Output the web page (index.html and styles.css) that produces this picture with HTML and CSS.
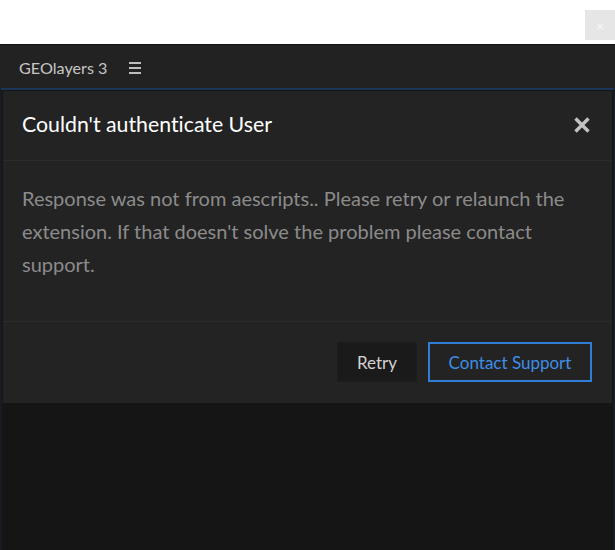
FILE: index.html
```html
<!DOCTYPE html>
<html>
<head>
<meta charset="utf-8">
<link rel="stylesheet" href="styles.css">
</head>
<body>
<div class="top">
  <div class="mini">×</div>
</div>
<div class="app">
  <div class="hdr">
    <span class="hdr-title">GEOlayers 3</span>
    <span class="burger"><i></i><i></i><i></i></span>
  </div>
  <div class="stage">
    <div class="modal">
      <div class="m-head">
        <h1 class="m-title">Couldn't authenticate User</h1>
        <svg class="m-close" width="18" height="18" viewBox="0 0 18 18"><path d="M2.5 2.5 L15.5 15.5 M15.5 2.5 L2.5 15.5" stroke="#c2c2c2" stroke-width="3.4" stroke-linecap="butt"/></svg>
      </div>
      <div class="m-body">
        <p>Response was not from aescripts.. Please retry or relaunch the extension. If that doesn't solve the problem please contact support.</p>
      </div>
      <div class="m-foot">
        <button class="btn btn-retry">Retry</button>
        <button class="btn btn-contact">Contact Support</button>
      </div>
    </div>
  </div>
</div>
</body>
</html>
```
FILE: styles.css
```css
html, body {
  margin: 0;
  padding: 0;
  background: #ffffff;
  font-family: "Lato", "Noto Sans", sans-serif;
  font-variant-ligatures: none;
}
.top {
  height: 44px;
  display: flex;
  justify-content: flex-end;
  align-items: flex-start;
  padding-top: 10px;
  box-sizing: border-box;
}
.mini {
  width: 30px;
  height: 30px;
  background: #e6e6e6;
  color: #f7f7f7;
  font-size: 14px;
  display: flex;
  align-items: center;
  justify-content: center;
}
.app {
  height: 506px;
  background: #222222;
  border-top: 1px solid #111111;
  box-sizing: border-box;
  display: flex;
  flex-direction: column;
}
.hdr {
  height: 43px;
  flex: none;
  display: flex;
  align-items: center;
  padding-left: 19px;
  gap: 22px;
  box-sizing: border-box;
}
.hdr-title {
  color: #c6c6c6;
  font-size: 16.2px;
  position: relative;
  top: 1px;
}
.burger {
  display: flex;
  flex-direction: column;
  gap: 3px;
  width: 12px;
  position: relative;
  top: 1px;
}
.burger i {
  display: block;
  height: 2px;
  background: #bdbdbd;
}
.stage {
  flex: 1;
  background: #151515;
  border-top: 2px solid #1b3657;
  border-left: 2px solid #171c23;
  border-right: 2px solid #171c23;
  padding: 1px 1px 0 1px;
  box-sizing: border-box;
}
.modal {
  background: #232323;
  display: flex;
  flex-direction: column;
}
.m-head {
  height: 70px;
  display: flex;
  align-items: center;
  justify-content: space-between;
  padding: 0 21px 3px 19px;
  border-bottom: 1px solid #2b2b2b;
  box-sizing: border-box;
}
.m-title {
  margin: 0;
  font-size: 21.3px;
  font-weight: 400;
  color: #ffffff;
}
.m-close {
  display: block;
  position: relative;
  top: 1px;
}
.m-body {
  padding: 21px 19px 0 19px;
  height: 161px;
  box-sizing: border-box;
  border-bottom: 1px solid #2b2b2b;
}
.m-body p {
  margin: 0;
  color: #8b8b8b;
  font-size: 20px;
  line-height: 33px;
}
.m-foot {
  display: flex;
  justify-content: flex-end;
  gap: 11px;
  padding: 20px 20px 21px 0;
}
.btn {
  height: 40px;
  font-family: inherit;
  font-size: 17px;
  background: transparent;
  padding: 0;
  box-sizing: border-box;
}
.btn-retry {
  width: 80px;
  background: #1a1a1a;
  border: 1px solid #1d1d1d;
  color: #d2d2d2;
}
.btn-contact {
  width: 164px;
  border: 2px solid #2f7fd6;
  color: #3f8ee6;
}
```
